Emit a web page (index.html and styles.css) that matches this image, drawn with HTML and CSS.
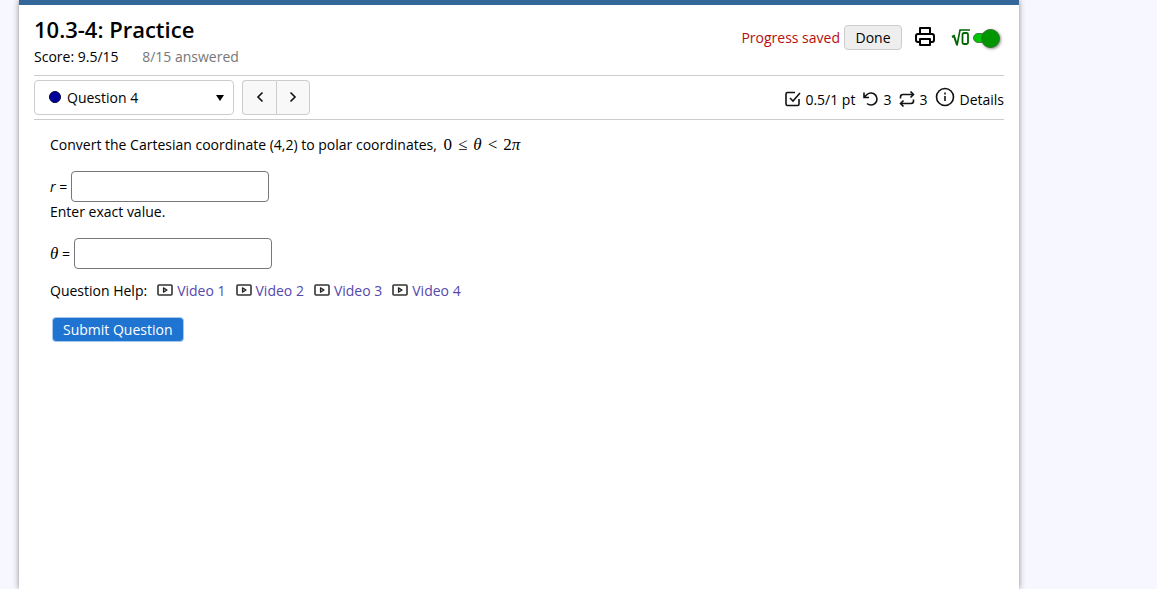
FILE: index.html
```html
<!DOCTYPE html>
<html lang="en">
<head>
  <meta charset="utf-8">
  <title>10.3-4: Practice</title>
  <link rel="stylesheet" href="styles.css">
</head>
<body>
  <svg class="defs" width="0" height="0" aria-hidden="true">
    <symbol id="video" viewBox="0 0 16 12">
      <rect x="1" y="1" width="14" height="10" rx="1" fill="none" stroke="#333" stroke-width="1.6"/>
      <path d="M6.5 3.8v4.4L10 6z" fill="#aaa" stroke="#222" stroke-width="1.2" stroke-linejoin="round"/>
    </symbol>
  </svg>

  <main class="page">
    <header class="top">
      <div>
        <h1>10.3-4: Practice</h1>
        <p class="score">Score: 9.5/15 <span class="answered">8/15 answered</span></p>
      </div>
      <div class="tools">
        <span class="saved">Progress saved</span>
        <button type="button" class="done">Done</button>
        <button type="button" class="icon-button" aria-label="Print">
          <svg width="20" height="20" viewBox="0 0 20 20" fill="none" stroke="#000" stroke-width="2" stroke-linejoin="round">
            <path d="M5 7V1h10v6M5 15H3q-2 0-2-2V9q0-2 2-2h14q2 0 2 2v4q0 2-2 2h-2M5 12h10v6H5z"/>
          </svg>
        </button>
        <label class="math-toggle">
          <svg width="20" height="20" viewBox="0 0 20 20" fill="none" stroke="#006400">
            <path d="M1 9l2-1 3 9" stroke-width="2"/>
            <path d="M6 17.500L9 2h10" stroke-width="1.6"/>
            <rect x="11.500" y="5" width="5.500" height="11" rx="1.500" stroke-width="1.800"/>
          </svg>
          <input type="checkbox" class="switch" aria-label="Equation editor" checked>
        </label>
      </div>
    </header>

    <nav class="bar">
      <div class="picker">
        <span class="dot"></span>
        <select aria-label="Question">
          <option>Question 4</option>
        </select>
        <span class="arrow"></span>
      </div>
      <div class="pager">
        <button type="button" aria-label="Previous question">
          <svg width="8" height="12" viewBox="0 0 8 12"><path d="M6.500 1.500L2 6l4.500 4.500"/></svg>
        </button>
        <button type="button" aria-label="Next question">
          <svg width="8" height="12" viewBox="0 0 8 12"><path d="M1.500 1.500L6 6l-4.500 4.500"/></svg>
        </button>
      </div>
      <div class="info">
        <span>
          <svg width="16" height="16" viewBox="0 0 16 16">
            <path d="M14 8v5q0 1.500-1.500 1.500h-10Q1 14.500 1 13V3q0-1.500 1.500-1.500H10M5 7l3 3 7-8"/>
          </svg>
          0.5/1 pt
        </span>
        <span>
          <svg width="16" height="16" viewBox="0 0 16 16">
            <path d="M1 1.500v5h5M1.500 6L4 3.500a6 6 0 1 1 0 9"/>
          </svg>
          3
        </span>
        <span>
          <svg width="16" height="16" viewBox="0 0 16 16">
            <path d="M11.500.5l3 3-3 3M1.500 7.500V6q0-2.500 2.500-2.500h10.500M4.500 9.500l-3 3 3 3M14.500 8.500V10q0 2.500-2.500 2.500H1.500"/>
          </svg>
          3
        </span>
        <button type="button" class="details">
          <svg width="20" height="20" viewBox="0 0 20 20">
            <circle cx="10" cy="10" r="8.500"/>
            <path d="M10 9v5M10 5.500v2"/>
          </svg>
          Details
        </button>
      </div>
    </nav>

    <form class="question">
      <p>Convert the Cartesian coordinate (4,2) to polar coordinates, <span class="math">0<span class="rel">≤</span><i>θ</i><span class="rel">&lt;</span>2<i>π</i></span></p>
      <div class="field">
        <label for="r"><i>r</i> =</label>
        <input type="text" id="r">
      </div>
      <p class="hint">Enter exact value.</p>
      <div class="field">
        <label for="theta"><i class="theta">θ</i> =</label>
        <input type="text" id="theta">
      </div>
      <div class="help">
        <span>Question Help:</span>
        <a href="#"><svg width="16" height="12"><use href="#video"/></svg>Video 1</a>
        <a href="#"><svg width="16" height="12"><use href="#video"/></svg>Video 2</a>
        <a href="#"><svg width="16" height="12"><use href="#video"/></svg>Video 3</a>
        <a href="#"><svg width="16" height="12"><use href="#video"/></svg>Video 4</a>
      </div>
      <button type="submit" class="submit">Submit Question</button>
    </form>
  </main>
</body>
</html>
```
FILE: styles.css
```css
* {
  box-sizing: border-box;
}
body {
  margin: 0;
  background: #f7f7ff;
  color: #000;
  font-family: "Trebuchet MS", "Open Sans", sans-serif;
  font-size: 14px;
  line-height: 20px;
}
button, input, select {
  font: inherit;
  color: inherit;
}
p {
  margin: 0;
}
.defs {
  position: absolute;
}
.page {
  max-width: 1000px;
  min-height: 100vh;
  margin-left: 19px;
  padding: 0 15px;
  background: #fff;
  border-top: 5px solid #336699;
  box-shadow: 0 0 6px #888;
}
.top {
  display: flex;
  justify-content: space-between;
  height: 71px;
  padding-top: 10px;
  border-bottom: 1px solid #ccc;
}
h1 {
  margin: 0;
  font-size: 22px;
  font-weight: 600;
  line-height: 28px;
}
.score {
  margin-top: 4px;
}
.answered {
  margin-left: 20px;
  color: #777;
}
.tools {
  display: flex;
  align-items: center;
  height: 45px;
}
.saved {
  color: #b50d0d;
}
.done {
  width: 58px;
  height: 25px;
  margin-left: 4px;
  padding: 0;
  background: #eee;
  border: 1px solid #ccc;
  border-radius: 4px;
}
.icon-button {
  display: flex;
  margin: 0 16px 2px 13px;
  padding: 0;
  background: none;
  border: 0;
}
.math-toggle {
  display: flex;
  align-items: center;
  gap: 2px;
}
.switch {
  position: relative;
  appearance: none;
  width: 26px;
  height: 10px;
  margin: 0 5px 0 0;
  background: #00c800;
  border: 1px solid #487848;
  border-radius: 5px;
}
.switch::after {
  content: "";
  position: absolute;
  top: -5px;
  right: -2px;
  width: 17px;
  height: 17px;
  background: #009600;
  border: 1px solid #287828;
  border-radius: 50%;
  box-shadow: 1px 1px 3px #888;
}
.bar {
  display: flex;
  align-items: center;
  height: 44px;
  border-bottom: 1px solid #ccc;
}
.picker {
  position: relative;
  width: 200px;
}
.picker select {
  appearance: none;
  width: 100%;
  height: 35px;
  padding: 0 32px;
  background: #fff;
  border: 1px solid #ccc;
  border-radius: 4px;
}
.dot {
  position: absolute;
  top: 11px;
  left: 15px;
  width: 12px;
  height: 12px;
  background: #00009c;
  border: 1px solid #000040;
  border-radius: 50%;
}
.arrow {
  position: absolute;
  top: 15px;
  right: 10px;
  border: 4px solid transparent;
  border-top: 6px solid #000;
  border-bottom: 0;
}
.pager {
  display: flex;
  margin-left: 8px;
}
.pager button {
  width: 34px;
  height: 35px;
  padding: 0;
  background: #f8f8f8;
  border: 1px solid #ccc;
  border-right: 0;
  border-radius: 4px 0 0 4px;
}
.pager button + button {
  border-right: 1px solid #ccc;
  border-radius: 0 4px 4px 0;
}
.pager path, .info path, .info circle {
  fill: none;
  stroke: #111;
  stroke-width: 1.6;
}
.info {
  display: flex;
  align-items: center;
  gap: 8px;
  margin-left: auto;
  padding-top: 4px;
}
.info span, .details {
  display: flex;
  align-items: center;
  gap: 4px;
}
.details {
  padding: 0;
  background: none;
  border: 0;
}
.info svg {
  margin-bottom: 2px;
}
.details svg {
  margin-bottom: 5px;
}
.question {
  padding: 15px 16px;
}
.math {
  margin-left: 3px;
  font-family: "Liberation Serif", serif;
  font-size: 17px;
}
.rel {
  margin: 0 6px;
}
.field {
  display: flex;
  align-items: center;
  gap: 4px;
  margin-top: 16px;
}
.field input {
  width: 198px;
  height: 31px;
  padding: 0 6px;
  background: #fff;
  border: 1px solid #777;
  border-radius: 4px;
}
.theta {
  font-family: "Liberation Serif", serif;
  font-size: 17px;
}
.help {
  display: flex;
  gap: 10px;
  margin-top: 12px;
}
.help a {
  display: flex;
  align-items: center;
  gap: 4px;
  color: #5548ad;
  text-decoration: none;
}
.help svg {
  margin-bottom: 2px;
}
.submit {
  display: block;
  height: 25px;
  margin: 16px 2px;
  padding: 0 10px;
  background: #1f74d1;
  border: 1px solid #a5c8ee;
  border-radius: 4px;
  color: #fff;
  font-weight: 500;
}
```
